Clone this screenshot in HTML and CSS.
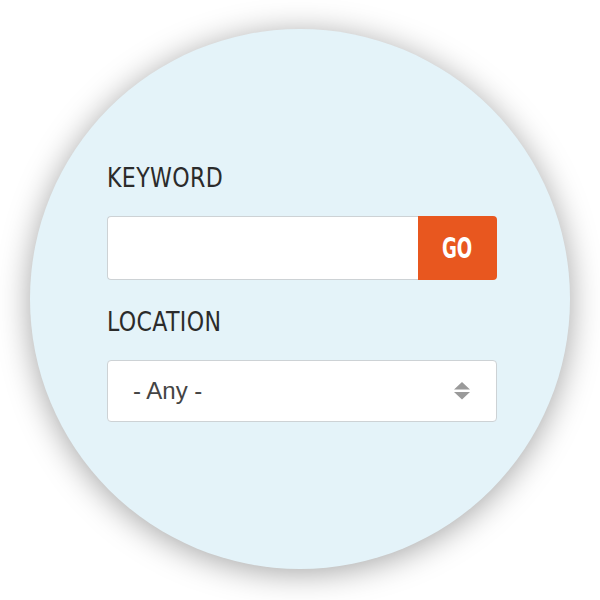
FILE: index.html
```html
<!DOCTYPE html>
<html>
<head>
<meta charset="utf-8">
<link rel="stylesheet" href="styles.css">
</head>
<body>
<div class="stage">
  <div class="circle">
    <form class="search">
      <label class="label"><span>KEYWORD</span></label>
      <div class="field">
        <div class="input"></div>
        <button type="button" class="go"><span>GO</span></button>
      </div>
      <label class="label label-second"><span>LOCATION</span></label>
      <div class="select">
        <span class="select-text">- Any -</span>
        <span class="arrows">
          <svg width="18" height="20" viewBox="0 0 18 20"><path d="M9 1 L17 8.5 L1 8.5 Z M1 11 L17 11 L9 18.5 Z" fill="#9a9a9a"/></svg>
        </span>
      </div>
    </form>
  </div>
</div>
</body>
</html>
```
FILE: styles.css
```css
html, body {
  margin: 0;
  padding: 0;
  background: #ffffff;
}
.stage {
  width: 600px;
  height: 600px;
  display: flex;
  justify-content: center;
  padding-top: 29px;
  box-sizing: border-box;
}
.circle {
  width: 540px;
  height: 540px;
  border-radius: 50%;
  background: #e4f3f9;
  box-shadow: 0 4px 32px rgba(0, 0, 0, 0.36);
  box-sizing: border-box;
  padding: 134px 73px 0 77px;
}
.search {
  display: flex;
  flex-direction: column;
  width: 390px;
}
.label {
  font-family: "DejaVu Sans Condensed", "DejaVu Sans", sans-serif;
  font-size: 27px;
  line-height: 30px;
  height: 30px;
  color: #2b2b2b;
  letter-spacing: 0.4px;
}
.label span {
  display: inline-block;
  transform: scaleX(0.91);
  transform-origin: left center;
}
.label-second {
  margin-top: 27px;
}
.field {
  margin-top: 23px;
  display: flex;
  height: 64px;
}
.input {
  flex: 1;
  background: #fff;
  border: 1px solid #cdd2d5;
  border-right: none;
  border-radius: 4px 0 0 4px;
}
.go {
  width: 79px;
  border: none;
  margin: 0;
  padding: 0;
  background: #e8571f;
  border-radius: 0 4px 4px 0;
  color: #fff;
  font-family: "DejaVu Sans Condensed", "DejaVu Sans", sans-serif;
  font-weight: bold;
  font-size: 28px;
  display: flex;
  align-items: center;
  justify-content: center;
}
.go span {
  display: inline-block;
  transform: scaleX(0.72);
}
.select {
  margin-top: 23px;
  height: 62px;
  box-sizing: border-box;
  background: #fff;
  border: 1px solid #cdd2d5;
  border-radius: 4px;
  display: flex;
  align-items: center;
  padding: 0 25px 0 25px;
}
.select-text {
  flex: 1;
  font-family: "Liberation Sans", Arial, sans-serif;
  font-size: 24px;
  color: #444;
}
.arrows {
  display: flex;
}
.arrows svg {
  display: block;
}
```
